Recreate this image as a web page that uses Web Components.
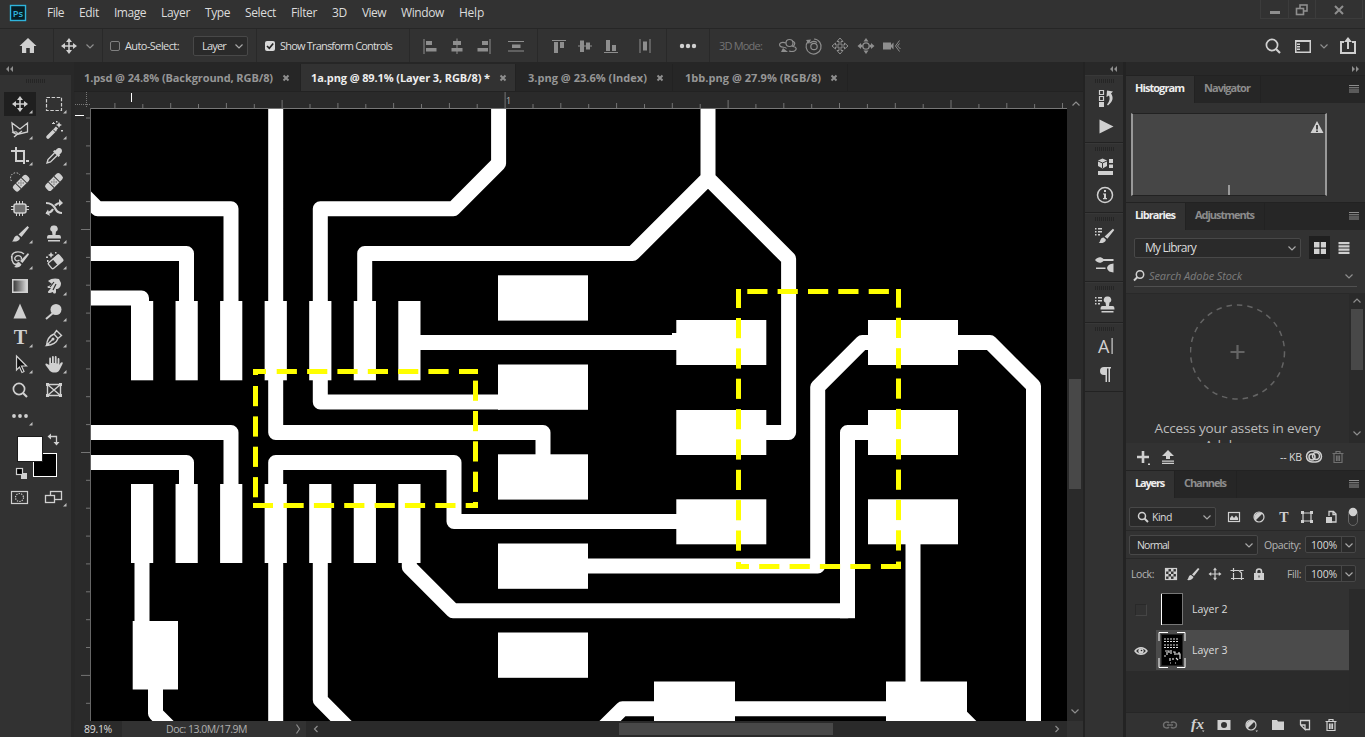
<!DOCTYPE html>
<html lang="en">
<head>
<meta charset="utf-8">
<title>Photoshop workspace</title>
<style>
html,body{margin:0;height:100%;background:#323232;overflow:hidden}
body{font-family:"Open Sans","Noto Sans",sans-serif;font-size:12px;color:#dcdcdc}
</style>
</head>
<body>
<ps-app></ps-app>
<script>
const ICONS = {
  logo:'<rect x="4.5" y="4.5" width="15" height="15" fill="#061e26" stroke="#2fb4dc" stroke-width="1.4"/><text x="12" y="15.5" font-size="9.5" font-weight="600" text-anchor="middle" fill="#2fb4dc">Ps</text>',
  home:'<path d="M12 4L3.500 12H6V19H10.200V14H13.800V19H18V12H20.500Z"/>',
  move:'<path class="s" stroke-width="1.500" d="M12 6V18M6 12H18"/><path d="M12 4L15 8H9ZM12 20L15 16H9ZM4 12L8 9V15ZM20 12L16 9V15Z"/>',
  chev:'<path class="s" stroke-width="1.200" d="M8.500 10.500L12 14L15.500 10.500"/>',
  chevup:'<path class="s" stroke-width="1.200" d="M8.500 13.500L12 10L15.500 13.500"/>',
  chevr:'<path class="s" stroke-width="1.200" d="M10.500 7.500L13.500 12L10.500 16.500"/>',
  chevrs:'<path class="s" stroke-width="1.200" d="M10.500 9L13.500 12L10.500 15"/>',
  chevls:'<path class="s" stroke-width="1.200" d="M13.500 9L10.500 12L13.500 15"/>',
  unchecked:'<rect class="s" x="7.500" y="7.500" width="9" height="9" rx="1.500" style="stroke:#808080"/>',
  checked:'<rect x="7" y="7" width="10" height="10" rx="2" fill="#d8d8d8"/><path d="M9 12L11.300 14.300L15.200 9.500" fill="none" stroke="#222" stroke-width="1.600"/>',
  al:'<path d="M4.500 5H5.500V20H4.500ZM7 7H13V11H7ZM7 14H17.500V17.500H7Z"/>',
  ac:'<path d="M11.500 4.500H12.500V20H11.500ZM8 7H16V11H8ZM6.500 14H17.500V17.500H6.500Z"/>',
  ar:'<path d="M18.500 5H19.500V20H18.500ZM11 7H17V11H11ZM6.500 14H17V17.500H6.500Z"/>',
  dv:'<path d="M4 7H20V8H4ZM8 10.500H16.500V14H8ZM4 16.500H20V17.500H4Z"/>',
  at:'<path d="M5 6H19V7H5ZM7 8H11V19H7ZM13 8H17V14H13Z"/>',
  am:'<path d="M5 11.500H19V12.500H5ZM7 6.500H11V18H7ZM13 8.500H17V15.500H13Z"/>',
  ab:'<path d="M5 18H19V19H5ZM7 6H11V17H7ZM13 11H17V17H13Z"/>',
  dh:'<path d="M6.500 5H7.500V19H6.500ZM16.500 5H17.500V19H16.500ZM10 7.500H14V16.500H10Z"/>',
  dots:'<circle cx="6" cy="12" r="2.200"/><circle cx="12" cy="12" r="2.200"/><circle cx="18" cy="12" r="2.200"/>',
  d1:'<g class="s" stroke-width="1.200"><circle cx="13.500" cy="9" r="3.500"/><path d="M10 9C5 7 2.500 10 4 12C6 14 9 12.500 10.500 14.500M16 7C20 8 19 11 17 12.500C21 13 21 15.500 18.500 17C16 18 13 17 13 17"/></g><path d="M7 14L12 18H5Z"/>',
  d2:'<g class="s" stroke-width="1.200"><circle cx="12" cy="12.500" r="3.200"/><path d="M6 7.500A7.500 7.500 0 1 0 12 5M8 9A5.500 5.500 0 0 1 15 8.500"/></g><path d="M4 6L9 5.500L7 10Z"/>',
  d3:'<g class="s" stroke-width="1"><path d="M12 4L15 7.500H13V11H16.500V9L20 12L16.500 15V13H13V16.500H15L12 20L9 16.500H11V13H7.500V15L4 12L7.500 9V11H11V7.500H9Z"/></g>',
  d4:'<circle class="s" cx="12" cy="12" r="3.200" stroke-width="1.300"/><path d="M12 4L14.500 7.500H9.500ZM12 20L14.500 16.500H9.500ZM3.500 12L7 9V10.800H8.500V13.200H7V15ZM20.500 12L17 9V10.800H15.500V13.200H17V15Z"/>',
  d5:'<path d="M3 8.500H11V11L13.500 8.500V15.500L11 13V15.500H3Z"/><path class="s" d="M19.500 6.500L15.500 12L19.500 17.500M19.500 9.500L17.500 12L20.500 15"/>',
  search:'<circle class="s" cx="11" cy="11" r="5.600" stroke-width="1.700"/><path class="s" stroke-width="2.200" d="M15 15L19 19"/>',
  work:'<rect class="s" x="4.750" y="6.750" width="14.500" height="11.500" stroke-width="1.500"/><path d="M6 9.500H9V11H6ZM6 12H9V13.500H6ZM6 14.500H9V16H6Z"/><path d="M4 6H20V8H4Z"/>',
  share:'<path class="s" stroke-width="2" d="M8 8H5V19H19V8H16"/><path d="M11 7H13V15H11ZM12 3L16 8H8Z"/>',
  dl:'<path d="M11 9L8 12L11 15ZM15 9L12 12L15 15Z"/>',
  dr:'<path d="M9 9L12 12L9 15ZM13 9L16 12L13 15Z"/>',
  x:'<path class="s" stroke-width="2" d="M9.500 9.500L14.500 14.500M14.500 9.500L9.500 14.500"/>',
  wmin:'<rect x="7" y="13" width="10" height="3"/>',
  wmax:'<rect class="s" x="10" y="7" width="7" height="6" stroke-width="1.600"/><rect x="6.500" y="10.500" width="7" height="6" style="stroke:currentColor;stroke-width:1.600;fill:#323232"/>',
  wclose:'<path class="s" stroke-width="2" d="M8 8L16 16M16 8L8 16"/>',
  marquee:'<rect class="s" x="4.500" y="5.500" width="15" height="13" stroke-width="1.200" stroke-dasharray="3.500 1.600"/>',
  lasso:'<path class="s" stroke-width="1.300" d="M5 14.500L4 5L12 11L19.500 5V14L9 16.500L5 14.500C8 13 10 14 9 16.500L6 19M9 16.500L14 13"/>',
  wand:'<path class="s" stroke-width="3.600" stroke-linecap="round" d="M6 19L13 12"/><path stroke="#323232" stroke-width="1" d="M11 11.500L14 14.500"/><path class="s" stroke-width="3" d="M13.500 11L15 9.500"/><path d="M11 4H12V6H11ZM10 5H13V6H10ZM17 4L18 6L20 7L18 8L17 10L16 8L14 7L16 6ZM19 12H21V13.500H19ZM14 3H15.500V4.500H14Z"/>',
  crop:'<path class="s" stroke-width="2" d="M3 7H16V20M8 3V17H16M18 17H21"/>',
  dropper:'<path d="M14 6C16 3 20 3.500 20 7C20 9 18 10 17.500 10.500L18 11.500L16.500 13L11 7.500L12.500 6L13 6.500Z"/><path class="s" stroke-width="1.400" d="M12.500 9L6 15.500L5 19L8.500 18L15 11.500"/>',
  sheal:'<g transform="rotate(-45 13 13)"><rect x="3.500" y="9.500" width="19" height="7.500" rx="2.500"/><path d="M8.500 9H9.500V17H8.500ZM16.500 9H17.500V17H16.500Z" fill="#323232"/><path fill="#323232" d="M11 11H12V12H11ZM14 11H15V12H14ZM11 14H12V15H11ZM14 14H15V15H14ZM12.500 12.500H13.500V13.500H12.500Z"/></g><path class="s" stroke-dasharray="1.500 1.500" d="M3.500 11A5 5 0 0 1 12 5"/>',
  heal:'<g transform="rotate(-45 12 12)"><rect x="2" y="8" width="20" height="8" rx="2.500"/><path d="M7.500 8H8.500V16H7.500ZM15.500 8H16.500V16H15.500Z" fill="#323232"/><path fill="#323232" d="M10 10H11V11H10ZM13 10H14V11H13ZM10 13H11V14H10ZM13 13H14V14H13ZM11.500 11.500H12.500V12.500H11.500Z"/></g>',
  patch:'<rect x="6" y="8" width="12" height="9" rx="2" style="fill:#707070;stroke:currentColor;stroke-width:1.500"/><path d="M8 5H9V8H8ZM11 5H12V8H11ZM14 5H15V8H14ZM8 17H9V20H8ZM11 17H12V20H11ZM14 17H15V20H14ZM3 10H6V11H3ZM3 13H6V14H3ZM18 10H21V11H18ZM18 13H21V14H18Z"/>',
  shuffle:'<path class="s" stroke-width="2.200" d="M4 7C9 7 12 10 13.500 13C15 16 17 17 20 17M4 17C8 17 10 15 11 13M13 9.500C15 7 17 7 19 7"/><path d="M17 3L21 7L17 10.500ZM6 13.500L3.500 17.500L8 20Z"/>',
  brush:'<path d="M19.500 4L21 5.500L13.500 15L10.500 12.500ZM9.500 13.500L12 16C11.500 19 8 20 4 19.500C6.500 18 5 14 9.500 13.500Z"/>',
  stamp:'<path d="M12 3.500A3.200 3.200 0 0 1 14 9.500L13.500 13H17C18.500 13 19 14 19 16.500H5C5 14 5.500 13 7 13H10.500L10 9.500A3.200 3.200 0 0 1 12 3.500ZM6 18H18V19.500H6Z"/>',
  hist:'<path d="M20 5L21 6.500L14.500 15L12 13ZM11 14L13.500 16.500C12.500 19 9 20 6 19C8.500 18 7.500 14.500 11 14Z"/><path class="s" stroke-width="1.300" d="M11.500 12C9 14 6 12 7 9.500C9 6 15 8 13 11.500M4 13V7C6 3 13 3 16 6M3.500 8C4 15 6 17 9 16"/>',
  eraser:'<g transform="rotate(-40 13 14)"><rect x="6.500" y="10.500" width="14" height="7.500" rx="1.500" class="s" stroke-width="1.400"/><path d="M13 10H20.500V18H13Z"/></g><path d="M9 4L10 6L12 7L10 8L9 10L8 8L6 7L8 6ZM4 8.500H6V10H4ZM5 12H6.500V14H5ZM13 4H14.500V5.500H13Z"/>',
  grad:'<defs><linearGradient id="g"><stop stop-color="#333"/><stop offset="1" stop-color="#ddd"/></linearGradient></defs><rect x="4.750" y="5.750" width="14.500" height="12.500" style="fill:url(#g);stroke:currentColor;stroke-width:1.500"/>',
  smudge:'<path d="M6 7C9 4 14 4 17 5L19 9C19 13 17 15 14 15L14 18C14 20 11 20 11 18L8 19C6.500 19.500 5 18 6.500 17L9 14L6.500 14C5 13.500 5 12 7 12L10 10Z"/><path d="M8 13L12 8M11 16L14 10" stroke="#323232" stroke-width="1.200"/>',
  tri:'<path d="M12 3.500L18.500 18.500H5.500Z"/>',
  dodge:'<circle cx="14" cy="9.500" r="5.500"/><path class="s" stroke-width="2" d="M11 13L4 19"/>',
  type:'<text x="12.500" y="18" font-family="Liberation Serif,serif" font-weight="700" font-size="20" text-anchor="middle">T</text>',
  pen:'<path class="s" stroke-width="1.400" d="M4.500 19.500C5 14 7 10 12 8L16 12.500C14.500 17 10 19 4.500 19.500L10.500 13.500M12.500 7.500L14.500 4.500L19.500 9.500L16.500 12"/><circle cx="11" cy="13" r="1.500"/>',
  arrow:'<path d="M8.500 4L18.500 14H13.500L16 19.500L14 20.500L11.500 15L8.500 18Z" style="fill:#111;stroke:currentColor;stroke-width:1.200"/>',
  hand:'<path d="M7.200 13V6.500C7.200 5 9 5 9 6.500V11H10V5C10 3.500 11.800 3.500 11.800 5V11H12.800V5C12.800 3.500 14.600 3.500 14.600 5V11.500H15.600V7C15.600 5.500 17.400 5.500 17.400 7V13L18.500 11C19.500 9.500 21.500 10 20.500 12L17.500 18C16.500 20 15 20.500 12.500 20.500C8.500 20.500 7.500 18.500 6.500 17L3.500 13C3 11.500 4.500 11 5.500 12Z"/>',
  frame:'<path class="s" stroke-width="1.400" d="M5.500 6.500H18.500V17.500H5.500ZM5.500 6.500L18.500 17.500M18.500 6.500L5.500 17.500"/><path d="M4 5H7V8H4ZM17 5H20V8H17ZM4 16H7V19H4ZM17 16H20V19H17Z"/>',
  dots2:'<circle cx="6" cy="12" r="1.900"/><circle cx="12" cy="12" r="1.900"/><circle cx="18" cy="12" r="1.900"/>',
  swap:'<path class="s" stroke-width="1.300" d="M9 8.500H15.500V15.500"/><path d="M10 5.500V11.500L6.500 8.500ZM12.500 14H18.500L15.500 17.500Z"/>',
  defc:'<rect x="12" y="12" width="6" height="6"/><rect x="7.500" y="7.500" width="6" height="6" style="fill:#000;stroke:currentColor;stroke-width:1.200"/>',
  mask:'<rect class="s" x="3.500" y="6.500" width="16" height="12" stroke-width="1.200"/><circle class="s" cx="11.500" cy="12.500" r="4" stroke-width="1.200" stroke-dasharray="1.300 1.200"/>',
  screen:'<rect class="s" x="8.500" y="6.500" width="11" height="8" stroke-width="1.300"/><rect x="3.500" y="10.500" width="9" height="7" style="fill:#323232;stroke:currentColor;stroke-width:1.300"/>',
  history:'<path class="s" stroke-width="1.200" d="M6.500 4.500H10.500V8.500H6.500ZM6.500 10.500H10.500V14.500H6.500Z"/><path d="M6 16H11V21H6Z"/><path d="M14 4.500L20 5.500L18 7.500C20.500 11 20.500 15 15 19.500L14 18.500C17 15 17 12 16 9.500L13.500 11Z"/>',
  play:'<path d="M6.500 5.500L20.500 12.500L6.500 19.500Z"/>',
  props:'<path d="M9.500 3.500L14 5.500V11L9.500 13.500L5 11V5.500Z"/><path d="M5 6L9.500 8L14 6M9.500 8V13" stroke="#323232" fill="none"/><path d="M16 4H20V8H16ZM16 9.500H20V13H16ZM5 16H20V20H5Z"/>',
  info:'<circle class="s" cx="12" cy="12" r="7.500" stroke-width="1.500"/><path d="M11 7H13V9H11ZM10 10.500H13V15H14V16.200H10V15H11V11.500H10Z"/>',
  list3:'<path d="M2 4H3.500V5.500H2ZM5 4H9V5.500H5ZM2 7H3.500V8.500H2ZM5 7H9V8.500H5ZM2 10H3.500V11.500H2ZM5 10H7V11.500H5Z"/>',
  presets:'<path d="M3 7C6 3.500 9 3.500 11.500 6H21.500V8H11.500C9 10.500 6 10.500 3 7ZM4 14.500H13.500V16H4ZM15 15C16 11.500 18 11 21.500 10.500V19.500C18 19 16 18.500 15 15Z"/>',
  achar:'<text x="5" y="18.500" font-size="18">A</text><path d="M18.500 4H19.700V20H18.500Z"/>',
  para:'<path d="M11 5H18V6.500H17V20H15.500V6.500H14V20H12.500V13H11A4 4 0 0 1 11 5Z"/>',
  menu:'<path d="M7 8H17V9H7ZM7 10.200H17V11.200H7ZM7 12.400H17V13.400H7ZM7 14.600H17V15.600H7Z"/>',
  grid4:'<path d="M6 6H11.500V11.500H6ZM12.800 6H18V11.500H12.800ZM6 12.800H11.500V18H6ZM12.800 12.800H18V18H12.800Z"/>',
  list:'<path d="M6.500 6H17.500V8.300H6.500ZM6.500 9.300H17.500V11.500H6.500ZM6.500 12.500H17.500V14.700H6.500ZM6.500 15.700H17.500V18H6.500Z"/>',
  psearch:'<circle class="s" cx="13" cy="10.500" r="3.700" stroke-width="1.500"/><path class="s" stroke-width="2" d="M10.500 13L7 16.500"/>',
  ksearch:'<circle class="s" cx="11" cy="11" r="3.500" stroke-width="1.500"/><path class="s" stroke-width="2" d="M13.500 13.500L17 17"/>',
  plus:'<path d="M10.700 6H13.300V10.700H18V13.300H13.300V18H10.700V13.300H6V10.700H10.700ZM17 18.500H19V20H17Z"/>',
  upload:'<path d="M12 5L18 11H14V14H10V11H6ZM6 15.500H18V16.700H6ZM6 17.700H18V19H6Z"/>',
  cc:'<rect class="s" x="4.500" y="6" width="15" height="11" rx="5.500" stroke-width="1.500"/><circle class="s" cx="10" cy="12" r="3" stroke-width="1.500"/><circle class="s" cx="14" cy="11" r="3.500" stroke-width="1.500"/>',
  trash:'<path class="s" stroke-width="1.200" d="M6.500 8.500H17.500M10 8.500V6.500H14V8.500M8 9V17.500H16V9M10.500 10.500V16M12 10.500V16M13.500 10.500V16"/>',
  pic:'<rect class="s" x="6.500" y="7.500" width="11" height="9" stroke-width="1.200"/><path d="M8 15V13L10 10.500L12 13L14 10.500L16 13V15Z"/>',
  half:'<circle class="s" cx="12" cy="12" r="5" stroke-width="1.200"/><path d="M8.500 15.500A5 5 0 0 1 15.500 8.500Z"/>',
  tsm:'<text x="12" y="16.700" font-family="Liberation Serif,serif" font-weight="700" font-size="14" text-anchor="middle">T</text>',
  shape:'<path class="s" stroke-width="1.200" d="M8 8H16V16H8Z"/><path d="M6 6H9V9H6ZM15 6H18V9H15ZM6 15H9V18H6ZM15 15H18V18H15Z"/>',
  smart:'<path class="s" stroke-width="1.300" d="M10 11V6.500H14.500L17 9V17H13M14 6.500V9.500H17"/><rect x="7" y="12" width="6" height="6"/>',
  toggle:'<rect class="s" x="7.500" y="4" width="9" height="16.500" rx="4.500" style="stroke:#666"/><circle cx="12" cy="7" r="4.200"/>',
  checker:'<rect class="s" x="6.500" y="6.500" width="11" height="11" stroke-width="1.200"/><path d="M7 7H9.500V9.500H7ZM12 7H14.500V9.500H12ZM9.500 9.500H12V12H9.500ZM14.500 9.500H17V12H14.500ZM7 12H9.500V14.500H7ZM12 12H14.500V14.500H12ZM9.500 14.500H12V17H9.500ZM14.500 14.500H17V17H14.500Z"/>',
  bsm:'<path d="M17 6L18.500 7L13 14L11 12.500ZM10 13L12.500 15C12 17.500 9 18.500 6 18C8 17 7 13.500 10 13Z"/>',
  msm:'<path class="s" stroke-width="1.200" d="M12 7V17M7 12H17"/><path d="M12 5.500L14 8.200H10ZM12 18.500L14 15.800H10ZM5.500 12L8.200 10V14ZM18.500 12L15.800 10V14Z"/>',
  artb:'<path class="s" stroke-width="1.200" d="M8.500 6V10M8.500 11V18M5.500 8.500H14L16.500 11V18M6 16.500H19M15 8.500H18.500"/>',
  lock:'<path class="s" stroke-width="1.600" d="M9.500 12V9.500A2.500 2.500 0 0 1 14.500 9.500V12"/><path d="M7 11H17V18H7Z"/><path d="M11.500 13.500H12.500V15.500H11.500Z" fill="#323232"/>',
  eye:'<path class="s" stroke-width="1.400" d="M6 12C9 7.700 15 7.700 18 12C15 16.300 9 16.300 6 12Z"/><circle cx="12" cy="12" r="2.700"/><circle cx="12.500" cy="11.500" r=".8" fill="#222"/>',
  nolink:'<path class="s" stroke-width="1.400" d="M11 10C10 8.500 5.500 8.500 5.500 12C5.500 15.500 10 15.500 11 14M13 10C14 8.500 18.500 8.500 18.500 12C18.500 15.500 14 15.500 13 14M9 12H15"/>',
  fx:'<text x="6" y="16" font-family="Liberation Serif,serif" font-style="italic" font-size="15.500" font-weight="700">fx</text><path d="M17 17.500H19.500L18.200 19Z"/>',
  lmask:'<path fill-rule="evenodd" d="M5.500 7H18.500V17H5.500ZM12 9A3 3 0 1 0 12 15A3 3 0 1 0 12 9Z"/>',
  half2:'<circle class="s" cx="12" cy="12" r="5" stroke-width="1.200"/><path d="M8.500 15.500A5 5 0 0 1 15.500 8.500ZM16.500 17.500H19L17.700 19Z"/>',
  folder:'<path d="M6 7H11L12 8.500H18V17H6Z"/>',
  newl:'<path class="s" stroke-width="1.300" d="M7.500 12V7.500H16.500V16.500H12M7.500 12H12V16.500L7.500 12"/>',
  warn:'<path fill-rule="evenodd" d="M12 6L18.500 18H5.500ZM11 10V14.500H13V10ZM11 15.500V17H13V15.500Z"/>'
};

function define(name, css, html, after){
  const t = document.createElement('template');
  t.innerHTML = '<style>*{box-sizing:border-box}' + css + '</style>' + html;
  customElements.define(name, class extends HTMLElement{
    connectedCallback(){
      if(this.shadowRoot) return;
      this.attachShadow({mode:'open'}).append(t.content.cloneNode(true));
      if(after) after(this, this.shadowRoot);
    }
  });
}

/* An icon drawn on a 24px grid, centred in a cell of width w */
define('ps-icon', ':host{display:flex;flex:none;align-items:center;justify-content:center;height:24px;color:#d0d0d0}:host([dim]){color:#8e8e8e}:host([off]){color:#707070}svg{display:block;flex:none;overflow:visible;fill:currentColor;font-family:"Open Sans",sans-serif}.s{fill:none;stroke:currentColor}', '<svg width="24" height="24" viewBox="0 0 24 24"></svg>', (el, r) => {
  el.style.width = (el.getAttribute('w') || 24) + 'px';
  r.querySelector('svg').innerHTML = ICONS[el.getAttribute('n')];
});

/* A single-line label whose tracking is tuned to occupy width w */
define('ps-text', ':host{display:block;flex:none;white-space:nowrap;line-height:16px}span{display:inline-block}', '<span><slot></slot></span>', (el, r) => {
  const w = +el.getAttribute('w'), s = r.querySelector('span'), n = el.textContent.length;
  if(w){ s.style.letterSpacing = ((w - s.getBoundingClientRect().width) / n).toFixed(3) + 'px'; el.style.width = w + 'px'; }
});

define('ps-gap', ':host{display:block;flex:none}:host([line]){border-left:1px solid #292929;align-self:stretch}', '', el => {
  el.style.width = el.getAttribute('w') + 'px';
});

define('ps-select', ':host{display:flex;flex:none;align-items:center;justify-content:space-between;border:1px solid #484848;background:#2a2a2a;border-radius:2px;height:20px;color:#dcdcdc}.l{display:flex;align-items:center}.c{color:#a8a8a8}', '<div class="l"><slot></slot></div><ps-icon class="c" n="chev" w="16"></ps-icon>');

define('ps-menubar', ':host{display:flex;height:28px;align-items:center;padding-left:6px;background:#323232;font-size:12px}.m{display:flex;gap:15px;margin-left:17px;flex:1;margin-top:-3px}.w{display:flex;align-self:flex-start;height:19px;width:103px;margin-right:2px;border:1px solid #3c3c3c;border-top:0}.w ps-icon{height:19px;border-left:1px solid #3c3c3c}.w ps-icon:first-child{border:0}',
`<ps-icon n="logo" style="margin-top:-3px"></ps-icon><div class="m"><ps-text w="17">File</ps-text><ps-text w="20">Edit</ps-text><ps-text w="32">Image</ps-text><ps-text w="29">Layer</ps-text><ps-text w="25">Type</ps-text><ps-text w="31">Select</ps-text><ps-text w="26">Filter</ps-text><ps-text w="15">3D</ps-text><ps-text w="24">View</ps-text><ps-text w="43">Window</ps-text><ps-text w="25">Help</ps-text></div>
<div class="w"><ps-icon dim n="wmin" w="27"></ps-icon><ps-icon dim n="wmax" w="27"></ps-icon><ps-icon dim n="wclose" w="47"></ps-icon></div>`);

define('ps-options', ':host{display:flex;height:34px;align-items:center;background:#323232;border-top:1px solid #262626;font-size:11px}.f{flex:1}',
`<ps-gap w="8"></ps-gap><ps-icon n="home" w="40"></ps-icon><ps-gap w="5"></ps-gap><ps-gap line w="4"></ps-gap><ps-icon n="move" w="24"></ps-icon><ps-icon n="chev" w="18" dim></ps-icon><ps-gap w="3"></ps-gap><ps-gap line w="6"></ps-gap><ps-icon n="unchecked" w="14"></ps-icon><ps-gap w="3"></ps-gap><ps-text w="54">Auto-Select:</ps-text><ps-gap w="14"></ps-gap>
<ps-select style="width:55px;padding-left:8px;margin-top:1px"><ps-text w="24">Layer</ps-text></ps-select><ps-gap w="8"></ps-gap><ps-gap line w="7"></ps-gap><ps-icon n="checked" w="14"></ps-icon><ps-gap w="3"></ps-gap><ps-text w="112">Show Transform Controls</ps-text><ps-gap w="17"></ps-gap><ps-gap line w="9"></ps-gap>
<ps-icon dim n="al" w="26"></ps-icon><ps-icon dim n="ac" w="26"></ps-icon><ps-icon dim n="ar" w="25"></ps-icon><ps-gap w="8"></ps-gap><ps-icon dim n="dv" w="26"></ps-icon><ps-gap w="8"></ps-gap><ps-gap line w="9"></ps-gap><ps-icon dim n="at" w="26"></ps-icon><ps-icon dim n="am" w="26"></ps-icon><ps-icon dim n="ab" w="26"></ps-icon><ps-gap w="9"></ps-gap><ps-icon dim n="dh" w="24"></ps-icon><ps-gap w="9"></ps-gap><ps-gap line w="10"></ps-gap><ps-icon n="dots" w="24"></ps-icon><ps-gap w="9"></ps-gap><ps-gap line w="10"></ps-gap><ps-text w="43" style="color:#747474">3D Mode:</ps-text><ps-gap w="13"></ps-gap>
<ps-icon dim n="d1" w="26"></ps-icon><ps-icon dim n="d2" w="25"></ps-icon><ps-icon dim n="d3" w="27"></ps-icon><ps-icon dim n="d4" w="26"></ps-icon><ps-icon dim n="d5" w="26"></ps-icon><div class="f"></div>
<ps-icon n="search" w="30"></ps-icon><ps-icon n="work" w="30"></ps-icon><ps-icon dim n="chev" w="12"></ps-icon><ps-icon n="share" w="35"></ps-icon>`);

const TOOLS = ['move','marquee','lasso','wand','crop','dropper','sheal','heal','patch','shuffle','brush','stamp','hist','eraser','grad','smudge','tri','dodge','type','pen','arrow','hand','search','frame','dots2'];
const PLAIN = ['sheal','heal','patch','shuffle','grad','tri','search','frame'];
define('ps-tool', ':host{display:grid;place-items:center;width:32px;height:26px}:host([on]){background:#1f1f1f;background-clip:content-box;padding:1px 0}svg,::slotted(ps-icon){grid-area:1/1}svg{overflow:visible}', '<slot></slot><svg width="24" height="24"><path d="M24.500 18V21.500H21Z" fill="#bdbdbd"/></svg>', (el, r) => { if(el.hasAttribute('plain')) r.querySelector('svg').remove(); });

define('ps-grip', ':host{display:block;width:19px;height:4px;background:repeating-linear-gradient(90deg,#252525 0 1px,#323232 1px 2px)}', '');

define('ps-tools', `:host{display:block;width:74px;background:#323232;border-right:3px solid #282828}.h{height:13px;background:#282828;display:flex;align-items:center}.gr{height:16px;display:flex;justify-content:center;padding-top:4px}.g{display:grid;grid-template-columns:32px 32px;grid-auto-rows:26px;column-gap:2px;padding-left:4px}
.sw{margin:7px 0 0 16px;height:50px;position:relative}.fg,.bg{position:absolute;width:26px;height:26px;border:1px solid #222;background:#fff}.fg{left:1px;top:0;border-color:#1c1c1c}.bg{left:17px;top:17px;width:24px;height:24px;background:#000;border-color:#fff}.a{position:absolute;left:25px;top:-8px}.b{position:absolute;left:-7px;top:25px}`,
`<div class="h"><ps-icon dim n="dl" w="19"></ps-icon></div><div class="gr"><ps-grip></ps-grip></div><div class="g">${TOOLS.map((n,i)=>`<ps-tool ${i?'':'on'} ${PLAIN.includes(n)?'plain':''}><ps-icon n="${n}"></ps-icon></ps-tool>`).join('')}</div>
<div class="sw"><i class="bg"></i><i class="fg"></i><ps-icon class="a" n="swap"></ps-icon><ps-icon class="b" n="defc"></ps-icon></div><div class="g" style="margin-top:-2px"><ps-tool plain><ps-icon n="mask"></ps-icon></ps-tool><ps-tool><ps-icon n="screen"></ps-icon></ps-tool></div>`);

define('ps-tab', ':host{display:flex;flex:none;align-items:center;height:27px;padding-left:10px;color:#969696;font-size:11px;font-weight:700;border-right:1px solid #222}:host([on]){background:#323232;color:#ededed}ps-icon{margin-left:auto}', '<slot></slot><ps-icon n="x" dim w="24"></ps-icon>');

const hTicks = () => { let s=''; for(let i=-14;i<=20;i++){const x=504.6+i*27.87; if(x<92||x>1066)continue; const h=i===0?16:i%8===0?8:i%2===0?5:4; s+=`<rect x="${x.toFixed(1)}" y="${108-h}" width="1" height="${h}"/>`} return s; };
const vTicks = () => { let s=''; for(let i=-4;i<=17;i++){const y=229+i*27.87; if(y<112||y>719)continue; const h=i%8===0?9:4; s+=`<rect x="${90-h}" y="${y.toFixed(1)}" width="${h}" height="1"/>`} return s; };
const pads = () => { let s='';
  for(let i=0;i<7;i++){const x=131+i*44.55; s+=`<rect x="${x}" y="301" width="22.200" height="79.300"/><rect x="${x}" y="484" width="22.200" height="79"/>`}
  for(const y of [275.3,364.5,454.3,543.5,632.5]) s+=`<rect x="498" y="${y}" width="90" height="45.300"/>`;
  for(const x of [676.3,868]) for(const y of [320,410,499.3]) s+=`<rect x="${x}" y="${y}" width="90" height="45"/>`;
  return s+'<rect x="132.700" y="621" width="45.300" height="68.500"/><rect x="654" y="681.500" width="81" height="45"/><rect x="886" y="681.500" width="81" height="45"/><rect x="840" y="603.200" width="15" height="15"/><rect x="672" y="333" width="6" height="6"/>'; };
/* each marquee side: orientation, fixed coordinate, then start/end pairs */
const run = (a,n,len=20.2) => Array.from({length:n},(_,i)=>[a+i*30.35,a+i*30.35+len]);
const sides = [
  ['h',369,[[253,266],...run(276.7,6),[459,478]]], ['h',503,[[253,273],...run(283.5,6),[465.7,478]]],
  ['v',253,[[369,375],...run(386,4),[507,508]]], ['v',473,[...run(380.6,4),[502,508]]],
  ['h',289,[...run(747.3,5),[736,741],[896,901]]], ['h',564,[[736,749],...run(759.2,4),[881,901]]],
  ['v',736,[[289,308],...run(318,8),[562,569]]], ['v',896,[[289,307.7],...run(317.8,8),[561.6,569]]]
];
const marks = () => sides.map(([o,c,l])=>l.map(([a,b])=>o==='h'?`<rect x="${a.toFixed(1)}" y="${c}" width="${(b-a).toFixed(1)}" height="5"/>`:`<rect x="${c}" y="${a.toFixed(1)}" width="5" height="${(b-a).toFixed(1)}"/>`).join('')).join('');

define('ps-canvas', ':host{display:block;width:992px;height:629px}svg{display:block}', `<svg width="992" height="629" viewBox="75 92 992 629">
<rect x="75" y="92" width="992" height="629" fill="#2a2a2a"/><rect x="90" y="108" width="977" height="1" fill="#777"/><rect x="90" y="108" width="1" height="613" fill="#666"/>
<path d="M75 104.500H90M86.500 92V108" stroke="#777" stroke-dasharray="1 1"/>
<g fill="#747474">${hTicks()}${vTicks()}</g><rect x="131" y="93" width="1" height="9" fill="#fff"/><rect x="75" y="115" width="9" height="1" fill="#fff"/><text x="506" y="104" font-size="9" fill="#b5b5b5" font-family="Open Sans">1</text>
<svg x="91" y="109" width="976" height="612" viewBox="91 109 976 612"><rect x="91" y="109" width="976" height="612" fill="#000"/>
<g fill="#fff">${pads()}</g>
<g fill="none" stroke="#fff" stroke-width="15" stroke-linejoin="round">
<path d="M78 189L97.600 208.700H231V305M80 253.500H186.500V305M80 298H141.500V305M275.700 100V432.500H543V460M498.600 100V163.400L453.400 208.700H320.300V402H500M708 100V178.200L632.700 253.500H364.700V305M708 178.200L788.600 258.800V432.500H766M420 342.500H680M80 432.500H231V490M80 462.500H186.500V490M275.700 730V462.500H454V521.500H680M142 560V625M155.500 685V713.500L175 733M320.300 560V700L350 730M409.300 560V567L453 610.700H847.500V432.500H870M588 566H817.700V387L862.200 342.500H990L1033.500 386V730M913 540V685M890 708.700H622.400L600 731M950 705.300L990 745.300"/></g>
<g fill="#ff0">${marks()}</g></svg></svg>`);

define('ps-doc', `:host{display:grid;grid-template:30px 629px 16px/993px 16px;width:1011px;background:#282828;border-right:2px solid #232323}.t{grid-column:1/3;display:flex;padding-top:2px;background:#262626;border-bottom:1px solid #222}ps-canvas{margin-left:1px}.v{display:flex;flex-direction:column;align-items:center;background:#2a2a2a}.v i{width:12px;height:110px;margin-top:264px;background:#484848}
.st{display:flex;align-items:center;font-size:10.500px;background:#2a2a2a}.z{width:48px;padding-left:10px}.d{width:184px;height:16px;background:#323232;display:flex;align-items:center;padding-left:44px;color:#b0b0b0}.h{flex:1;display:flex;align-items:center}.h i{width:214px;height:12px;background:#484848;margin-left:293px}.c{background:#323232}ps-icon{height:16px}`,
`<div class="t"><ps-tab style="width:227px;padding-right:2px"><ps-text w="189">1.psd @ 24.8% (Background, RGB/8)</ps-text></ps-tab><ps-tab on style="width:215px"><ps-text w="179">1a.png @ 89.1% (Layer 3, RGB/8) *</ps-text></ps-tab><ps-tab style="width:157px;padding-left:12px"><ps-text w="119">3.png @ 23.6% (Index)</ps-text></ps-tab><ps-tab style="width:175px;padding-left:12px;padding-right:1px"><ps-text w="136">1bb.png @ 27.9% (RGB/8)</ps-text></ps-tab></div>
<ps-canvas></ps-canvas><div class="v"><ps-icon dim n="chevup" w="16" style="height:23px;margin-left:1px"></ps-icon><i></i><ps-icon dim n="chev" w="16" style="margin-top:auto;height:20px"></ps-icon></div>
<div class="st"><div class="z"><ps-text w="28">89.1%</ps-text></div><div class="d"><ps-text w="81">Doc: 13.0M/17.9M</ps-text><ps-icon n="chevr" w="16" dim style="margin-left:43px"></ps-icon></div><div class="h"><ps-icon dim n="chevls" w="20"></ps-icon><i></i><ps-icon dim n="chevrs" w="20" style="margin-left:auto"></ps-icon></div></div><div class="c"></div>`);

define('ps-group', ':host{display:flex;flex-direction:column;align-items:center;border-bottom:1px solid #222;border-top:1px solid #383838;width:38px;padding-left:2px}ps-grip{margin-top:3px;margin-left:-2px}', '<ps-grip></ps-grip><slot></slot>');
define('ps-strip', ':host{display:block;width:38px;background:#323232}.h{height:13px;background:#282828;display:flex;justify-content:flex-end;align-items:center}.o{display:grid}.o ps-icon{grid-area:1/1}',
`<div class="h"><ps-icon dim n="dl" w="18"></ps-icon></div>
<ps-group style="height:68px"><ps-icon n="history" style="margin-top:3px"></ps-icon><ps-icon n="play" style="margin-top:4px"></ps-icon></ps-group>
<ps-group style="height:70px"><ps-icon n="props" style="margin-top:4px"></ps-icon><ps-icon n="info" style="margin-top:4px"></ps-icon></ps-group>
<ps-group style="height:69px"><div class="o" style="margin-top:3px"><ps-icon n="list3"></ps-icon><ps-icon n="brush" style="transform:translateX(1px) scale(.92)"></ps-icon></div><ps-icon n="presets" style="margin-top:5px;margin-left:-2px"></ps-icon></ps-group>
<ps-group style="height:41px"><div class="o" style="margin-top:3px"><ps-icon n="list3"></ps-icon><ps-icon n="stamp" style="transform:translateX(2.500px)"></ps-icon></div></ps-group>
<ps-group style="height:69px"><ps-icon n="achar" style="margin-top:3px"></ps-icon><ps-icon n="para" style="margin-top:4px"></ps-icon></ps-group>`);

define('ps-ptab', ':host{display:flex;flex:none;height:28px;padding:4px 10px 0 9px;border-right:1px solid #222}:host([on]){background:#323232;color:#ededed}', '<slot></slot>');
define('ps-ptabs', ':host{display:flex;flex:none;height:28px;background:#262626;font-size:11px;font-weight:700;color:#8c8c8c;border-top:1px solid #222}ps-icon{margin-left:auto;height:25px}', '<slot></slot><ps-icon dim n="menu" w="22"></ps-icon>');

define('ps-histogram', ':host{display:block;flex:none;height:99px;padding:10px 0 0 5px;background:#323232}.b{width:196px;height:83px;background:#464646;border:1px solid #222;border-left:2px solid #999;border-right:2px solid #999;position:relative}.b ps-icon{position:absolute;right:-4px;top:1px}.b i{position:absolute;left:95px;bottom:0;width:2px;height:10px;background:#999}', '<div class="b"><ps-icon n="warn"></ps-icon><i></i></div>');

define('ps-libraries', `:host{display:block;flex:none;height:240px;background:#323232}.r{display:flex;align-items:center;padding-left:8px;height:35px}.g{width:21px;height:23px;background:#1f1f1f;display:grid;place-items:center;margin-left:8px}.s{display:flex;align-items:center;height:22px;margin:0 8px 0 8px;border-bottom:1px solid #505050;font-style:italic;color:#7c7c7c;font-size:11px}
.m{display:flex;height:150px;margin-top:6px}.c{width:223px;background:#2e2e2e;border-top:1px solid #292929;overflow:hidden;display:flex;flex-direction:column;align-items:center;color:#bcbcbc;font-size:13.500px}.c svg{margin:10px 0 20px;flex:none;display:block}.v{flex:1;background:#2a2a2a;display:flex;flex-direction:column;align-items:center}.v i{width:12px;height:61px;background:#484848}.v ps-icon{height:16px}.f{display:flex;height:26px;align-items:center;padding:2px 0 0 5px;font-size:10.500px}`,
`<div class="r"><ps-select style="width:167px;padding-left:10px"><ps-text w="51">My Library</ps-text></ps-select><div class="g"><ps-icon n="grid4" w="21"></ps-icon></div><ps-icon n="list" w="28"></ps-icon></div>
<div class="s"><ps-icon n="psearch" w="10"></ps-icon><ps-text w="93" style="margin-left:5px">Search Adobe Stock</ps-text><ps-icon dim n="chev" w="16" style="margin-left:auto"></ps-icon></div>
<div class="m"><div class="c"><svg width="96" height="96"><circle cx="47.500" cy="48" r="47" fill="none" stroke="#646464" stroke-width="1.500" stroke-dasharray="5.500 5"/><path d="M40.500 48H54.500M47.500 41V55" stroke="#646464" stroke-width="2.200"/></svg><ps-text w="166">Access your assets in every</ps-text><ps-text w="66" style="margin-top:1px">Adobe app</ps-text></div><div class="v"><ps-icon dim n="chevup" w="15"></ps-icon><i></i><ps-icon dim n="chev" w="15" style="margin-top:auto;height:20px"></ps-icon></div></div>
<div class="f"><ps-icon n="plus"></ps-icon><ps-icon n="upload" w="26"></ps-icon><ps-text w="22" style="margin-left:99px">-- KB</ps-text><ps-icon n="cc" w="24"></ps-icon><ps-icon off n="trash" w="23"></ps-icon></div>`);

define('ps-layer', ':host{display:flex;height:41px}.e{width:30px;height:41px;display:grid;place-items:center}.r{flex:1;height:40px;display:flex;align-items:center;padding-left:5px;color:#dcdcdc;font-size:10.500px}:host([on]) .r{background:#4b4b4b}.r ps-text{margin-left:8px}.n{width:12px;height:12px;border:1px solid #292929;border-right-color:#454545;border-bottom-color:#454545}',
 '<div class="e"></div><div class="r"><svg width="23" height="34" style="overflow:visible"></svg><ps-text w="32"><slot></slot></ps-text></div>', (el,r)=>{
  const on = el.hasAttribute('on');
  r.querySelector('.e').innerHTML = on ? '<ps-icon n="eye"></ps-icon>' : '<div class="n"></div>';
  let s = `<rect x=".5" y="1.500" width="21" height="31" fill="#000" stroke="${on?'#222':'#777'}"/>`;
  if(on){
    s += '<path d="M-2 8V-.500H7M16 -.500H24V8M-2 25V34.500H7M16 34.500H24V25" fill="none" stroke="#fff"/><g fill="none" stroke="#ddd" stroke-width="1.200">';
    s += '<path stroke-dasharray="2 1" d="M3 6H18M3 8.500H18M3 12H18M3 14.500H18"/><path d="M4 18H8V20M6 19V22M10 17V21M12 19H14V22M15 21H19V26M9 25V28M3 23H5M15 25L17 27M12 25V27M9 30H10M14 30H15M18 19V21"/></g>';
  } else s += '<path d="M.5 2V33" stroke="#fff"/>';
  r.querySelector('svg').innerHTML = s;
});

define('ps-value', ':host{display:flex;flex:none;width:51px;height:17px;border:1px solid #474747;background:#2a2a2a;border-radius:2px;align-items:center;color:#dcdcdc}ps-text{margin-left:5px}ps-icon{height:15px;border-left:1px solid #474747;margin-left:auto;color:#a8a8a8}', '<ps-text w="26">100%</ps-text><ps-icon n="chev" w="14"></ps-icon>');
define('ps-layers', `:host{display:flex;flex-direction:column;flex:1;background:#323232;font-size:10.500px}.a{display:flex;align-items:center;padding-left:3px}.k{height:32px;padding-top:6px}.n{height:28px;border-top:1px solid #282828}.l{height:31px;border-top:1px solid #282828;color:#b4b4b4}.m{display:flex;height:124px;border-bottom:1px solid #262626}.x{width:223px;background:#2b2b2b}.x ps-layer{background:#323232}.v{flex:1;background:#2a2a2a}.f{height:24px;padding-left:31px}`,
`<div class="a k"><ps-select style="width:87px;padding-left:1px"><ps-icon n="ksearch"></ps-icon><ps-text w="20" style="margin-left:-3px">Kind</ps-text></ps-select><ps-gap w="5"></ps-gap><ps-icon n="pic" w="26"></ps-icon><ps-icon n="half" w="24"></ps-icon><ps-icon n="tsm" w="25"></ps-icon><ps-icon n="shape" w="22"></ps-icon><ps-icon n="smart" w="26"></ps-icon><ps-icon n="toggle" w="17"></ps-icon></div>
<div class="a n"><ps-select style="width:129px;padding-left:7px"><ps-text w="32">Normal</ps-text></ps-select><ps-text w="37" style="margin-left:6px;color:#b4b4b4">Opacity:</ps-text><ps-value style="margin-left:4px"></ps-value></div>
<div class="a l" style="padding-bottom:1px"><ps-text w="23" style="margin-left:2px">Lock:</ps-text><ps-gap w="5"></ps-gap><ps-icon n="checker" w="23"></ps-icon><ps-icon n="bsm" w="22"></ps-icon><ps-icon n="msm" w="22"></ps-icon><ps-icon n="artb" w="22"></ps-icon><ps-icon n="lock" w="22"></ps-icon><ps-text w="14" style="margin-left:17px">Fill:</ps-text><ps-value style="margin-left:4px"></ps-value></div>
<div class="m"><div class="x"><ps-layer>Layer 2</ps-layer><ps-layer on>Layer 3</ps-layer></div><div class="v"></div></div>
<div class="a f"><ps-icon off n="nolink" w="26"></ps-icon><ps-icon n="fx" w="28"></ps-icon><ps-icon n="lmask" w="25"></ps-icon><ps-icon n="half2" w="30"></ps-icon><ps-icon n="folder" w="24"></ps-icon><ps-icon n="newl" w="30"></ps-icon><ps-icon n="trash" w="22"></ps-icon></div>`);

define('ps-panels', ':host{display:flex;flex-direction:column;width:242px;border-left:3px solid #232323;background:#323232}.h{height:13px;background:#282828;display:flex;justify-content:flex-end;align-items:center;flex:none}',
`<div class="h"><ps-icon dim n="dr" w="20"></ps-icon></div>
<ps-ptabs><ps-ptab on><ps-text w="49">Histogram</ps-text></ps-ptab><ps-ptab><ps-text w="46">Navigator</ps-text></ps-ptab></ps-ptabs><ps-histogram></ps-histogram>
<ps-ptabs><ps-ptab on><ps-text w="40">Libraries</ps-text></ps-ptab><ps-ptab><ps-text w="59">Adjustments</ps-text></ps-ptab></ps-ptabs><ps-libraries></ps-libraries>
<ps-ptabs><ps-ptab on><ps-text w="29">Layers</ps-text></ps-ptab><ps-ptab><ps-text w="42">Channels</ps-text></ps-ptab></ps-ptabs><ps-layers></ps-layers>`);

define('ps-app', ':host{display:grid;grid-template-rows:28px 34px 675px;width:1365px;height:737px;overflow:hidden;background:#282828}.b{display:flex}', '<ps-menubar></ps-menubar><ps-options></ps-options><div class="b"><ps-tools></ps-tools><ps-doc></ps-doc><ps-strip></ps-strip><ps-panels></ps-panels></div>');
</script>
</body>
</html>
